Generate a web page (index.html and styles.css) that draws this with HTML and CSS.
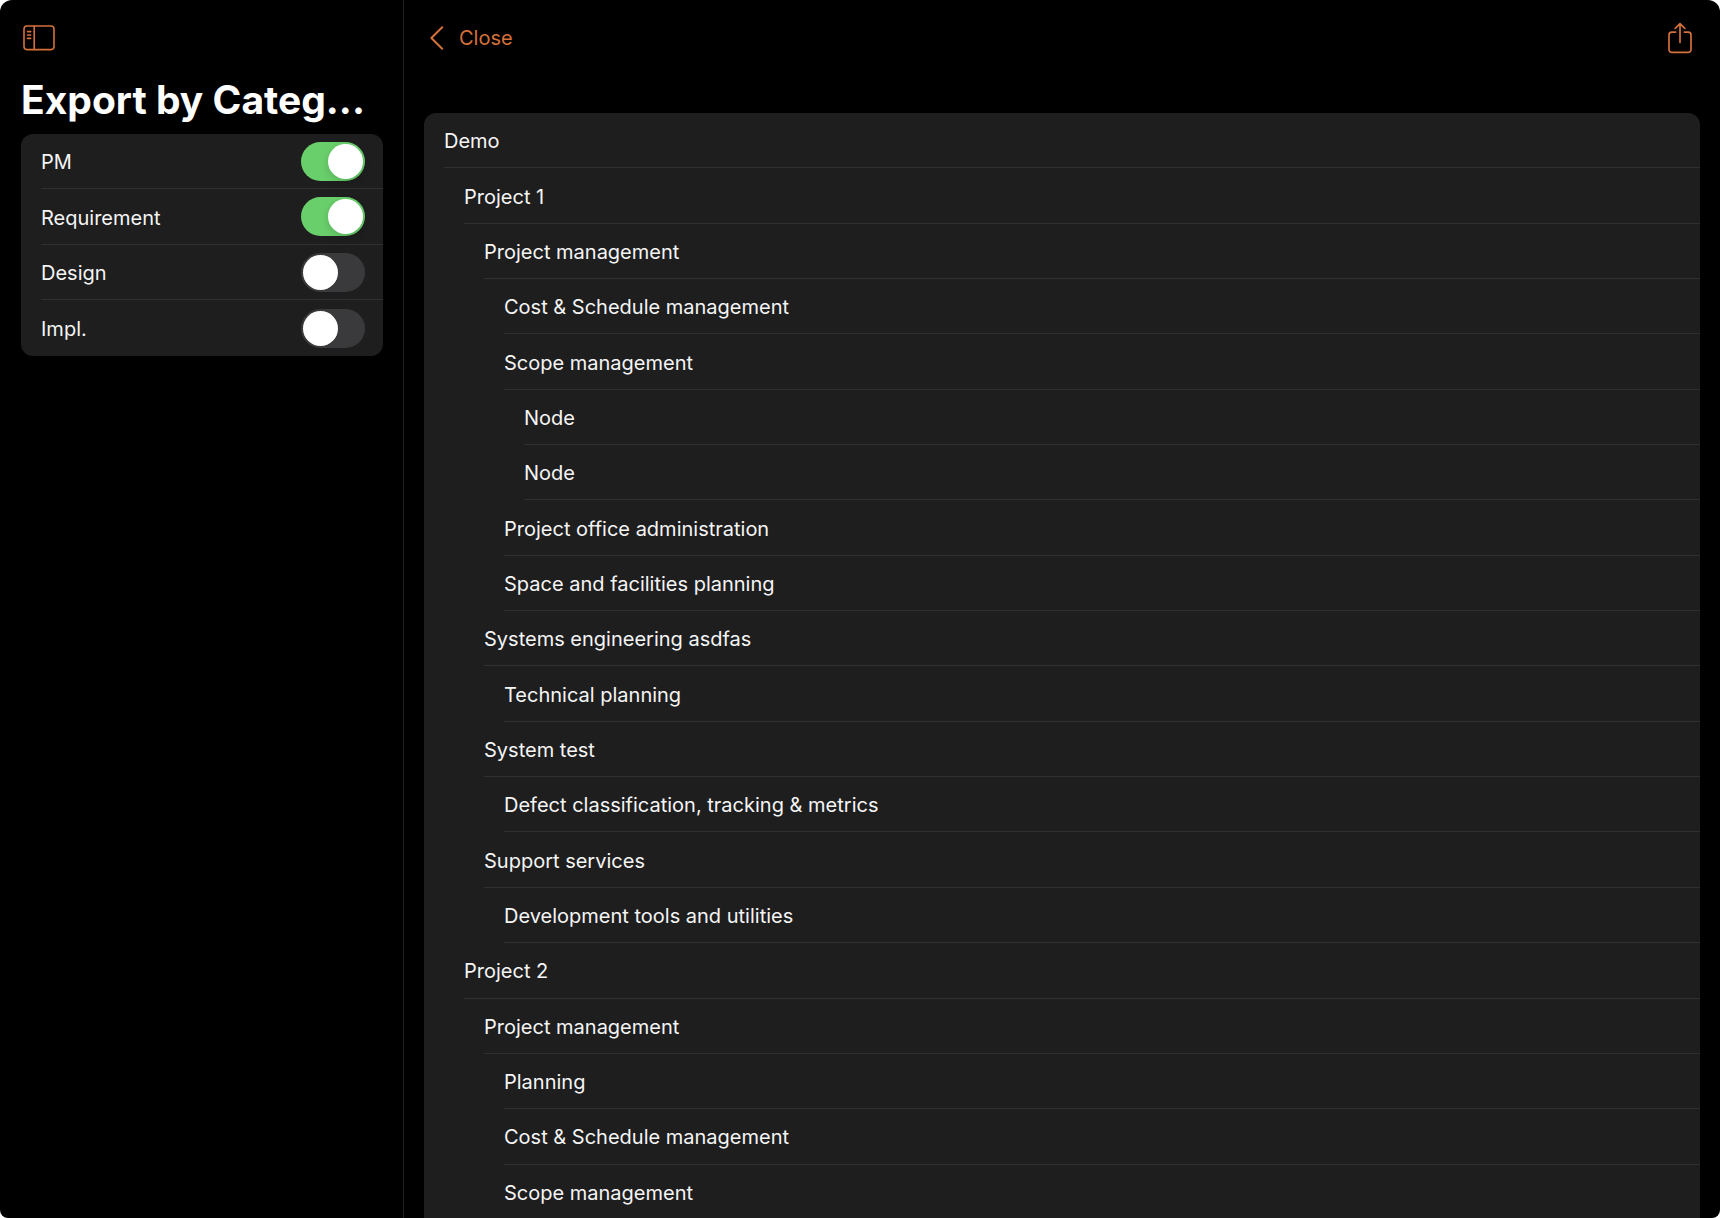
FILE: index.html
```html
<!DOCTYPE html>
<html lang="en">
<head>
<meta charset="utf-8">
<meta name="viewport" content="width=device-width, initial-scale=1">
<title>Export by Category</title>
<link rel="stylesheet" href="styles.css">
</head>
<body>
<div class="app">
  <aside class="sidebar">
    <header class="bar">
      <button class="bar-button" type="button" aria-label="Toggle sidebar">
        <svg width="32" height="26" viewBox="0 0 32 26" fill="none" stroke="currentColor" stroke-width="1.6" stroke-linecap="round" aria-hidden="true">
          <rect x="1" y="1" width="30" height="23.6" rx="3"/>
          <path d="M11.2 1v23.6M4.5 6.6h3.2M4.5 10h3.2M4.5 13.4h3.2"/>
        </svg>
      </button>
    </header>
    <h1 class="title">Export by Categ...</h1>
    <ul class="card">
      <li class="option"><label for="pm">PM</label><input class="switch" id="pm" type="checkbox" checked></li>
      <li class="option"><label for="requirement">Requirement</label><input class="switch" id="requirement" type="checkbox" checked></li>
      <li class="option"><label for="design">Design</label><input class="switch" id="design" type="checkbox"></li>
      <li class="option"><label for="impl">Impl.</label><input class="switch" id="impl" type="checkbox"></li>
    </ul>
  </aside>
  <main class="detail">
    <header class="bar">
      <button class="bar-button" type="button">
        <svg width="14" height="24" viewBox="0 0 14 24" fill="none" stroke="currentColor" stroke-width="2" stroke-linecap="round" stroke-linejoin="round" aria-hidden="true">
          <path d="M12.2 1.2 1.4 12l10.8 10.8"/>
        </svg>
        <span>Close</span>
      </button>
      <button class="bar-button" type="button" aria-label="Share">
        <svg width="24" height="32" viewBox="0 0 24 32" fill="none" stroke="currentColor" stroke-width="1.7" stroke-linecap="round" stroke-linejoin="round" aria-hidden="true">
          <path d="M7.6 10.2H3.8a2.8 2.8 0 0 0-2.8 2.8v14.6a2.8 2.8 0 0 0 2.8 2.8h16.4a2.8 2.8 0 0 0 2.8-2.8V13a2.8 2.8 0 0 0-2.8-2.8h-3.8M12 20.4V1.6M7.2 6.4 12 1.6l4.8 4.8"/>
        </svg>
      </button>
    </header>
    <ul class="card tree">
      <li class="node level-0">Demo</li>
      <li class="node level-1">Project 1</li>
      <li class="node level-2">Project management</li>
      <li class="node level-3">Cost &amp; Schedule management</li>
      <li class="node level-3">Scope management</li>
      <li class="node level-4">Node</li>
      <li class="node level-4">Node</li>
      <li class="node level-3">Project office administration</li>
      <li class="node level-3">Space and facilities planning</li>
      <li class="node level-2">Systems engineering asdfas</li>
      <li class="node level-3">Technical planning</li>
      <li class="node level-2">System test</li>
      <li class="node level-3">Defect classification, tracking &amp; metrics</li>
      <li class="node level-2">Support services</li>
      <li class="node level-3">Development tools and utilities</li>
      <li class="node level-1">Project 2</li>
      <li class="node level-2">Project management</li>
      <li class="node level-3">Planning</li>
      <li class="node level-3">Cost &amp; Schedule management</li>
      <li class="node level-3">Scope management</li>
    </ul>
  </main>
</div>
</body>
</html>
```
FILE: styles.css
```css
* {
  box-sizing: border-box;
}

html {
  background: #fff;
}

body {
  margin: 0;
  color: #f5f5f5;
  font-family: Inter, "Liberation Sans", sans-serif;
  font-size: 20px;
  line-height: 28px;
}

.app {
  display: flex;
  height: 100vh;
  overflow: hidden;
  background: #000;
  border-radius: 12px 12px 8px 8px;
}

.sidebar {
  flex: none;
  width: 404px;
  padding: 0 20px 0 21px;
  border-right: 1px solid #1f1f1f;
}

.detail {
  flex: 1;
  min-width: 0;
  display: flex;
  flex-direction: column;
  padding: 0 20px;
}

.bar {
  display: flex;
  align-items: center;
  justify-content: space-between;
  height: 75px;
}

.bar-button {
  display: flex;
  align-items: center;
  gap: 15px;
  margin: 0;
  padding: 0;
  border: 0;
  background: none;
  color: #d4703a;
  font: inherit;
}

.sidebar .bar {
  padding-left: 2px;
}

.detail .bar {
  flex: none;
  padding: 0 8px 0 6px;
}

.title {
  margin: 0 0 9px;
  color: #fff;
  font-size: 39px;
  font-weight: 700;
  line-height: 50px;
  white-space: nowrap;
}

.card {
  margin: 0;
  padding: 0;
  list-style: none;
  background: #1e1e1f;
  border-radius: 12px;
}

.option,
.node {
  display: flex;
  align-items: center;
  border-bottom: 1px solid #303032;
}

.option:last-child,
.node:last-child {
  border-bottom: 0;
}

.option {
  justify-content: space-between;
  height: 55px;
  margin-left: 20px;
  padding-right: 18px;
}

.option:nth-child(even) {
  height: 56px;
}

.option label {
  padding-top: 2px;
}

.switch {
  appearance: none;
  width: 64px;
  height: 39px;
  margin: 0;
  padding: 2px;
  border-radius: 20px;
  background: #3a393c;
}

.switch::before {
  content: "";
  display: block;
  width: 35px;
  height: 35px;
  border-radius: 50%;
  background: #fff;
}

.switch:checked {
  background: #69cf6b;
}

.switch:checked::before {
  margin-left: auto;
  box-shadow: 0 3px 8px rgba(0, 0, 0, 0.15);
}

/* The rows share the height of the pane, and the last one runs under its edge. */
.tree {
  flex: 1 0 auto;
  display: flex;
  flex-direction: column;
  margin: 38px 0 -2px;
  border-radius: 12px 12px 0 0;
}

.node {
  flex: 1 0 55px;
  padding-top: 2px;
}

.level-0 {
  margin-left: 20px;
}

.level-1 {
  margin-left: 40px;
}

.level-2 {
  margin-left: 60px;
}

.level-3 {
  margin-left: 80px;
}

.level-4 {
  margin-left: 100px;
}
```
